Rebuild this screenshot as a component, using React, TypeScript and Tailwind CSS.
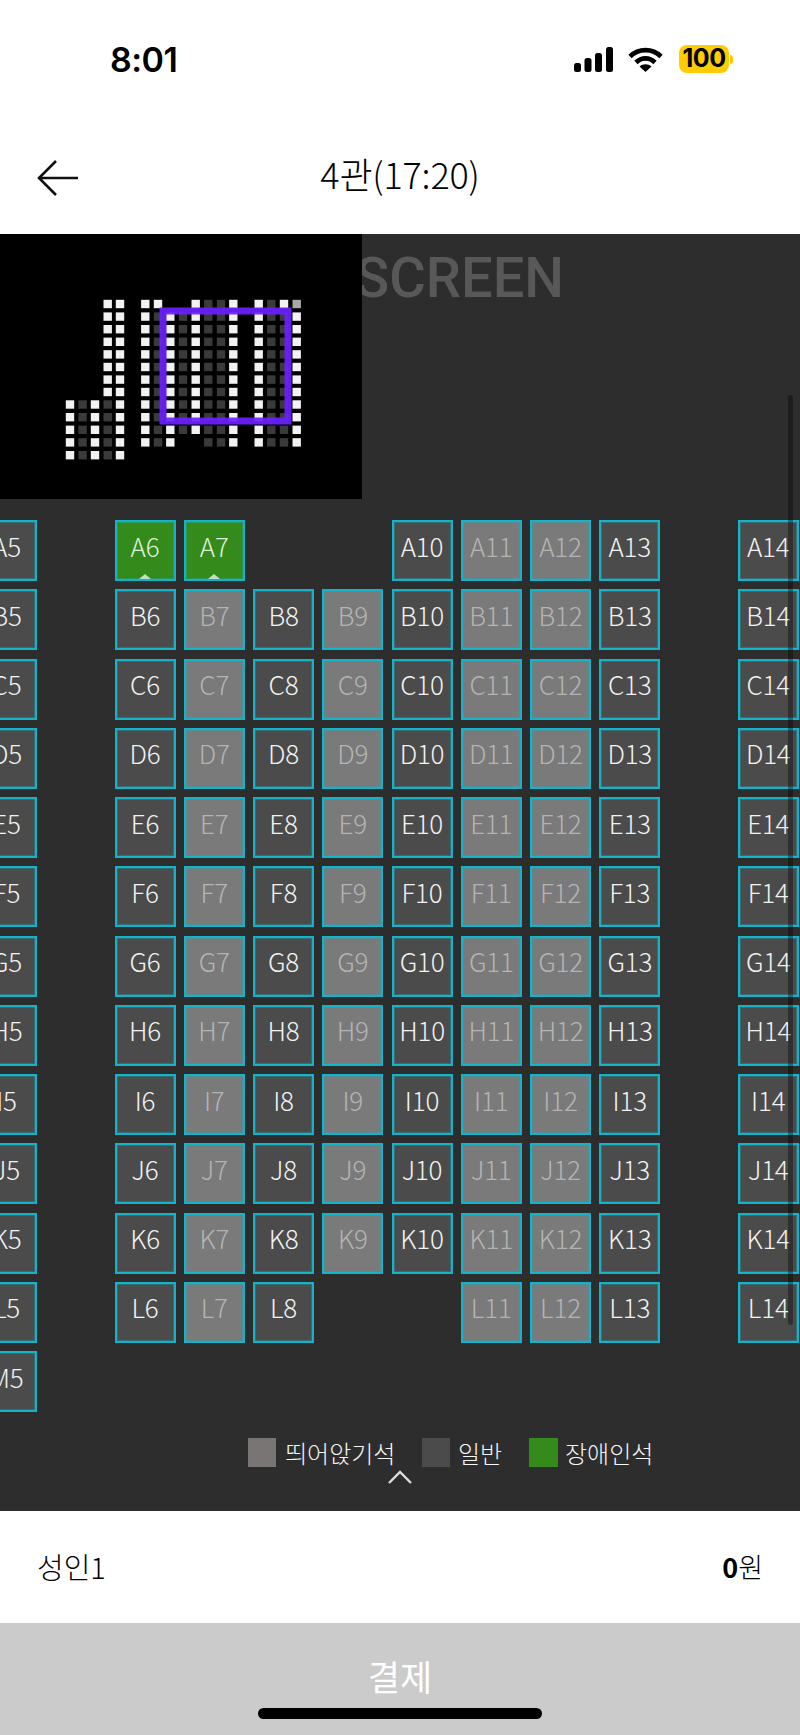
const ROW_LABELS = ["A", "B", "C", "D", "E", "F", "G", "H", "I", "J", "K", "L", "M"];

// one slot per grid column, 0 = aisle
const COLUMNS = [5, 0, 6, 7, 8, 9, 10, 11, 12, 13, 0, 14];
const GRAY_COLUMNS = [7, 9, 11, 12];
const MISSING: Record<string, number[]> = {
  A: [8, 9],
  L: [9, 10],
  M: [6, 7, 8, 9, 10, 11, 12, 13, 14],
};
const GREEN_SEATS = ["A6", "A7"];

// minimap: x of each column with first/last row and its colour per row
const MAP_X = [70, 82.6, 95, 107.7, 120, 145.3, 158, 170.3, 183, 195.7, 208.3, 221, 233.3, 258.7, 271.3, 284, 296.7];
const MAP_Y = [304, 316.6, 329.2, 341.8, 354.4, 367, 379.6, 392, 404.5, 417.2, 429.8, 442.4, 455.2];
const W = "#f2f2f2";
const D = "#3a3a3a";
const MAP_COLS: ((r: number) => string | null)[] = [
  (r) => (r >= 8 ? W : null),
  (r) => (r >= 8 ? D : null),
  (r) => (r >= 8 ? W : null),
  (r) => (r >= 8 ? D : W),
  () => W,
  (r) => (r <= 11 ? W : null),
  (r) => (r === 0 ? W : r <= 11 ? D : null),
  (r) => (r >= 1 && r <= 11 ? W : null),
  (r) => (r >= 1 && r <= 10 ? D : null),
  (r) => (r <= 10 ? W : null),
  (r) => (r <= 11 ? D : null),
  (r) => (r <= 11 ? D : null),
  (r) => (r <= 11 ? W : null),
  (r) => (r <= 11 ? W : null),
  (r) => (r <= 11 ? D : null),
  (r) => (r === 0 ? W : r <= 11 ? D : null),
  (r) => (r === 0 ? "#a8a8a8" : r <= 11 ? W : null),
];

function Seat({ row, col }: { row: string; col: number }) {
  if (col === 0 || MISSING[row]?.includes(col)) return <div />;
  const name = row + col;
  const green = GREEN_SEATS.includes(name);
  const gray = GRAY_COLUMNS.includes(col);

  let tone = "bg-[#4b4b4b] text-[#f2f2f2]";
  if (gray) tone = "bg-[#7a7a7a] text-[#b4b4b4]";
  if (green) tone = "bg-[#348a1a] text-[#dff0d8]";

  return (
    <div className={`relative flex h-[61px] items-center justify-center border-2 border-[#13b3c9] pb-[11px] text-[26px] font-light tracking-[-0.2px] shadow-[inset_0_0_0_1px_rgba(19,179,201,0.35)] ${tone}`}>
      {name}
      {green && (
        <span className="absolute bottom-0 left-1/2 h-0 w-0 -translate-x-1/2 border-x-[6px] border-b-[5px] border-x-transparent border-b-[#c4dcc4]" />
      )}
    </div>
  );
}

function MiniMap() {
  return (
    <div className="absolute left-0 top-0 h-[265px] w-[362px] bg-black">
      <svg width="362" height="265" viewBox="0 234 362 265">
        {MAP_COLS.map((color, c) =>
          MAP_Y.map((y, r) => {
            const fill = color(r);
            return fill ? <rect key={`${c}-${r}`} x={MAP_X[c] - 4.2} y={y - 4.2} width="8.4" height="8.4" fill={fill} /> : null;
          })
        )}
        <rect x="163" y="311" width="125" height="110" fill="none" stroke="#6a22ff" strokeOpacity="0.92" strokeWidth="7" />
      </svg>
    </div>
  );
}

function StatusIcons() {
  return (
    <div className="flex items-center">
      <svg width="39" height="25" viewBox="0 0 39 25" fill="#000">
        <rect x="0" y="16" width="7" height="9" rx="2.5" />
        <rect x="10.5" y="11" width="7" height="14" rx="2.5" />
        <rect x="21" y="6" width="7" height="19" rx="2.5" />
        <rect x="32" y="0" width="7" height="25" rx="2.5" />
      </svg>
      <svg className="ml-[15px]" width="35" height="25" viewBox="0 0 35 25" fill="none" stroke="#000" strokeWidth="4.6">
        <path d="M2 9.5C10.5 1 24.5 1 33 9.5" />
        <path d="M8 15.5C13.5 10 21.5 10 27 15.5" />
        <path d="M17.5 25L11.5 19.5C15 16.5 20 16.5 23.5 19.5Z" fill="#000" stroke="none" />
      </svg>
      <div className="ml-[16px] flex h-[28px] w-[50px] items-center justify-center rounded-[8px] bg-[#ffcc00] text-[25px] font-bold text-black font-['Inter',sans-serif] tracking-[-0.5px]">
        100
      </div>
      <span className="ml-[1px] h-[9px] w-[3px] rounded-r-full bg-[#ffcc00]" />
    </div>
  );
}

export default function App() {
  return (
    <div className="relative flex h-[1735px] w-[800px] flex-col overflow-hidden bg-white font-['Noto_Sans_CJK_KR','Liberation_Sans',sans-serif] text-black">
      {/* status bar */}
      <div className="flex h-[119px] items-start justify-between pl-[110px] pr-[67px] pt-[45px]">
        <span className="text-[34px] font-semibold leading-[30px] font-['Inter',sans-serif] tracking-[-0.5px]">8:01</span>
        <StatusIcons />
      </div>

      {/* nav */}
      <div className="relative flex h-[115px] items-center justify-center pb-[7px]">
        <svg className="absolute left-[37px] top-[41px]" width="42" height="36" viewBox="0 0 42 36" fill="none" stroke="#111" strokeWidth="2.6">
          <path d="M41 18H3M19 1L2 18l17 17" />
        </svg>
        <span className="text-[36px] font-light leading-none tracking-[-0.2px]">4관(17:20)</span>
      </div>

      {/* seat map */}
      <div className="relative h-[1277px] overflow-hidden bg-[#2d2d2d]">
        <div className="flex h-[286px] justify-end pr-[236px] pt-[11px]">
          <span className="text-[56px] font-medium leading-[66px] text-[#585858] font-['Roboto',sans-serif]">SCREEN</span>
        </div>
        <MiniMap />

        <div className="ml-[-24px] grid w-[900px] grid-cols-[repeat(12,61px)] gap-x-[8.25px] gap-y-[8.25px]">
          {ROW_LABELS.map((row) => COLUMNS.map((col, i) => <Seat key={row + i} row={row} col={col} />))}
        </div>

        {/* legend */}
        <div className="mt-[26px] flex h-[29px] items-center pl-[248px] text-[24px] font-light leading-none text-[#f6f6f6]">
          <span className="h-[29px] w-[28px] bg-[#7a7575]" />
          <span className="ml-[9px] w-[137px]">띄어앉기석</span>
          <span className="h-[29px] w-[28px] bg-[#4b4b4b]" />
          <span className="ml-[8px] w-[71px]">일반</span>
          <span className="h-[29px] w-[29px] bg-[#348a1a]" />
          <span className="ml-[7px]">장애인석</span>
        </div>

        <svg className="absolute left-[388px] top-[1236px]" width="24" height="14" viewBox="0 0 24 14" fill="none" stroke="#dddddd" strokeWidth="2.4">
          <path d="M1 13L12 2l11 11" />
        </svg>

        {/* scrollbar */}
        <div className="absolute left-[788px] top-[161px] h-[930px] w-[5px] rounded-full bg-black/35" />
      </div>

      {/* summary */}
      <div className="flex h-[112px] items-center justify-between px-[37px] pb-[2px]">
        <span className="text-[29px] font-light leading-none">성인1</span>
        <span className="text-[27px] font-light leading-none">
          <span className="font-bold">0</span>원
        </span>
      </div>

      {/* pay */}
      <div className="flex flex-1 items-center justify-center bg-[#cbcbcb] pb-[7px]">
        <span className="text-[35px] font-normal leading-none text-white">결제</span>
      </div>
      <div className="absolute bottom-[16px] left-[258px] h-[11px] w-[284px] rounded-full bg-black" />
    </div>
  );
}
